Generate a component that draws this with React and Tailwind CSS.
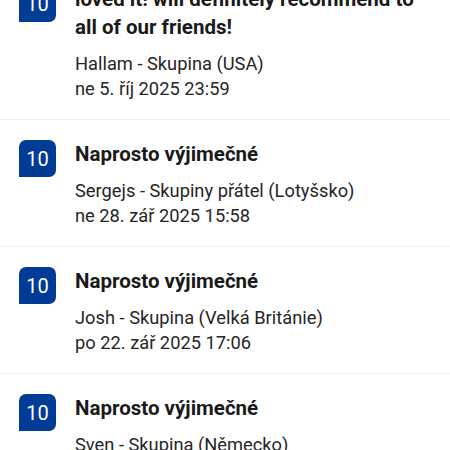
const REVIEWS = [
  {
    score: '10',
    title: 'loved it! will definitely recommend to all of our friends!',
    author: 'Hallam - Skupina (USA)',
    date: 'ne 5. říj 2025 23:59'
  },
  {
    score: '10',
    title: 'Naprosto výjimečné',
    author: 'Sergejs - Skupiny přátel (Lotyšsko)',
    date: 'ne 28. zář 2025 15:58'
  },
  {
    score: '10',
    title: 'Naprosto výjimečné',
    author: 'Josh - Skupina (Velká Británie)',
    date: 'po 22. zář 2025 17:06'
  },
  {
    score: '10',
    title: 'Naprosto výjimečné',
    author: 'Sven - Skupina (Německo)',
    date: 'čt 18. zář 2025 09:12'
  }
]

function ReviewRow({ review }) {
  return (
    <div className="flex gap-[19px] pl-[19px] pr-6 pt-5 pb-[18px] border-b border-[#efefef]">
      <div className="w-[37px] h-[37px] shrink-0 bg-[#003b95] text-white rounded-t-[7px] rounded-br-[7px] flex items-center justify-center text-[20px] leading-none">
        {review.score}
      </div>
      <div className="flex-1 min-w-0">
        <div className="text-[20.5px] leading-[28px] font-bold text-[#1a1a1a]">{review.title}</div>
        <div className="mt-[10px] text-[18.3px] leading-[25px] text-[#262626]">
          <div>{review.author}</div>
          <div>{review.date}</div>
        </div>
      </div>
    </div>
  )
}

export default function App() {
  return (
    <div className="w-[450px] h-[450px] overflow-hidden bg-white" style={{ fontFamily: 'Roboto, "Noto Sans", sans-serif' }}>
      <div className="-mt-[35px]">
        {REVIEWS.map((r, i) => (
          <ReviewRow key={i} review={r} />
        ))}
      </div>
    </div>
  )
}
